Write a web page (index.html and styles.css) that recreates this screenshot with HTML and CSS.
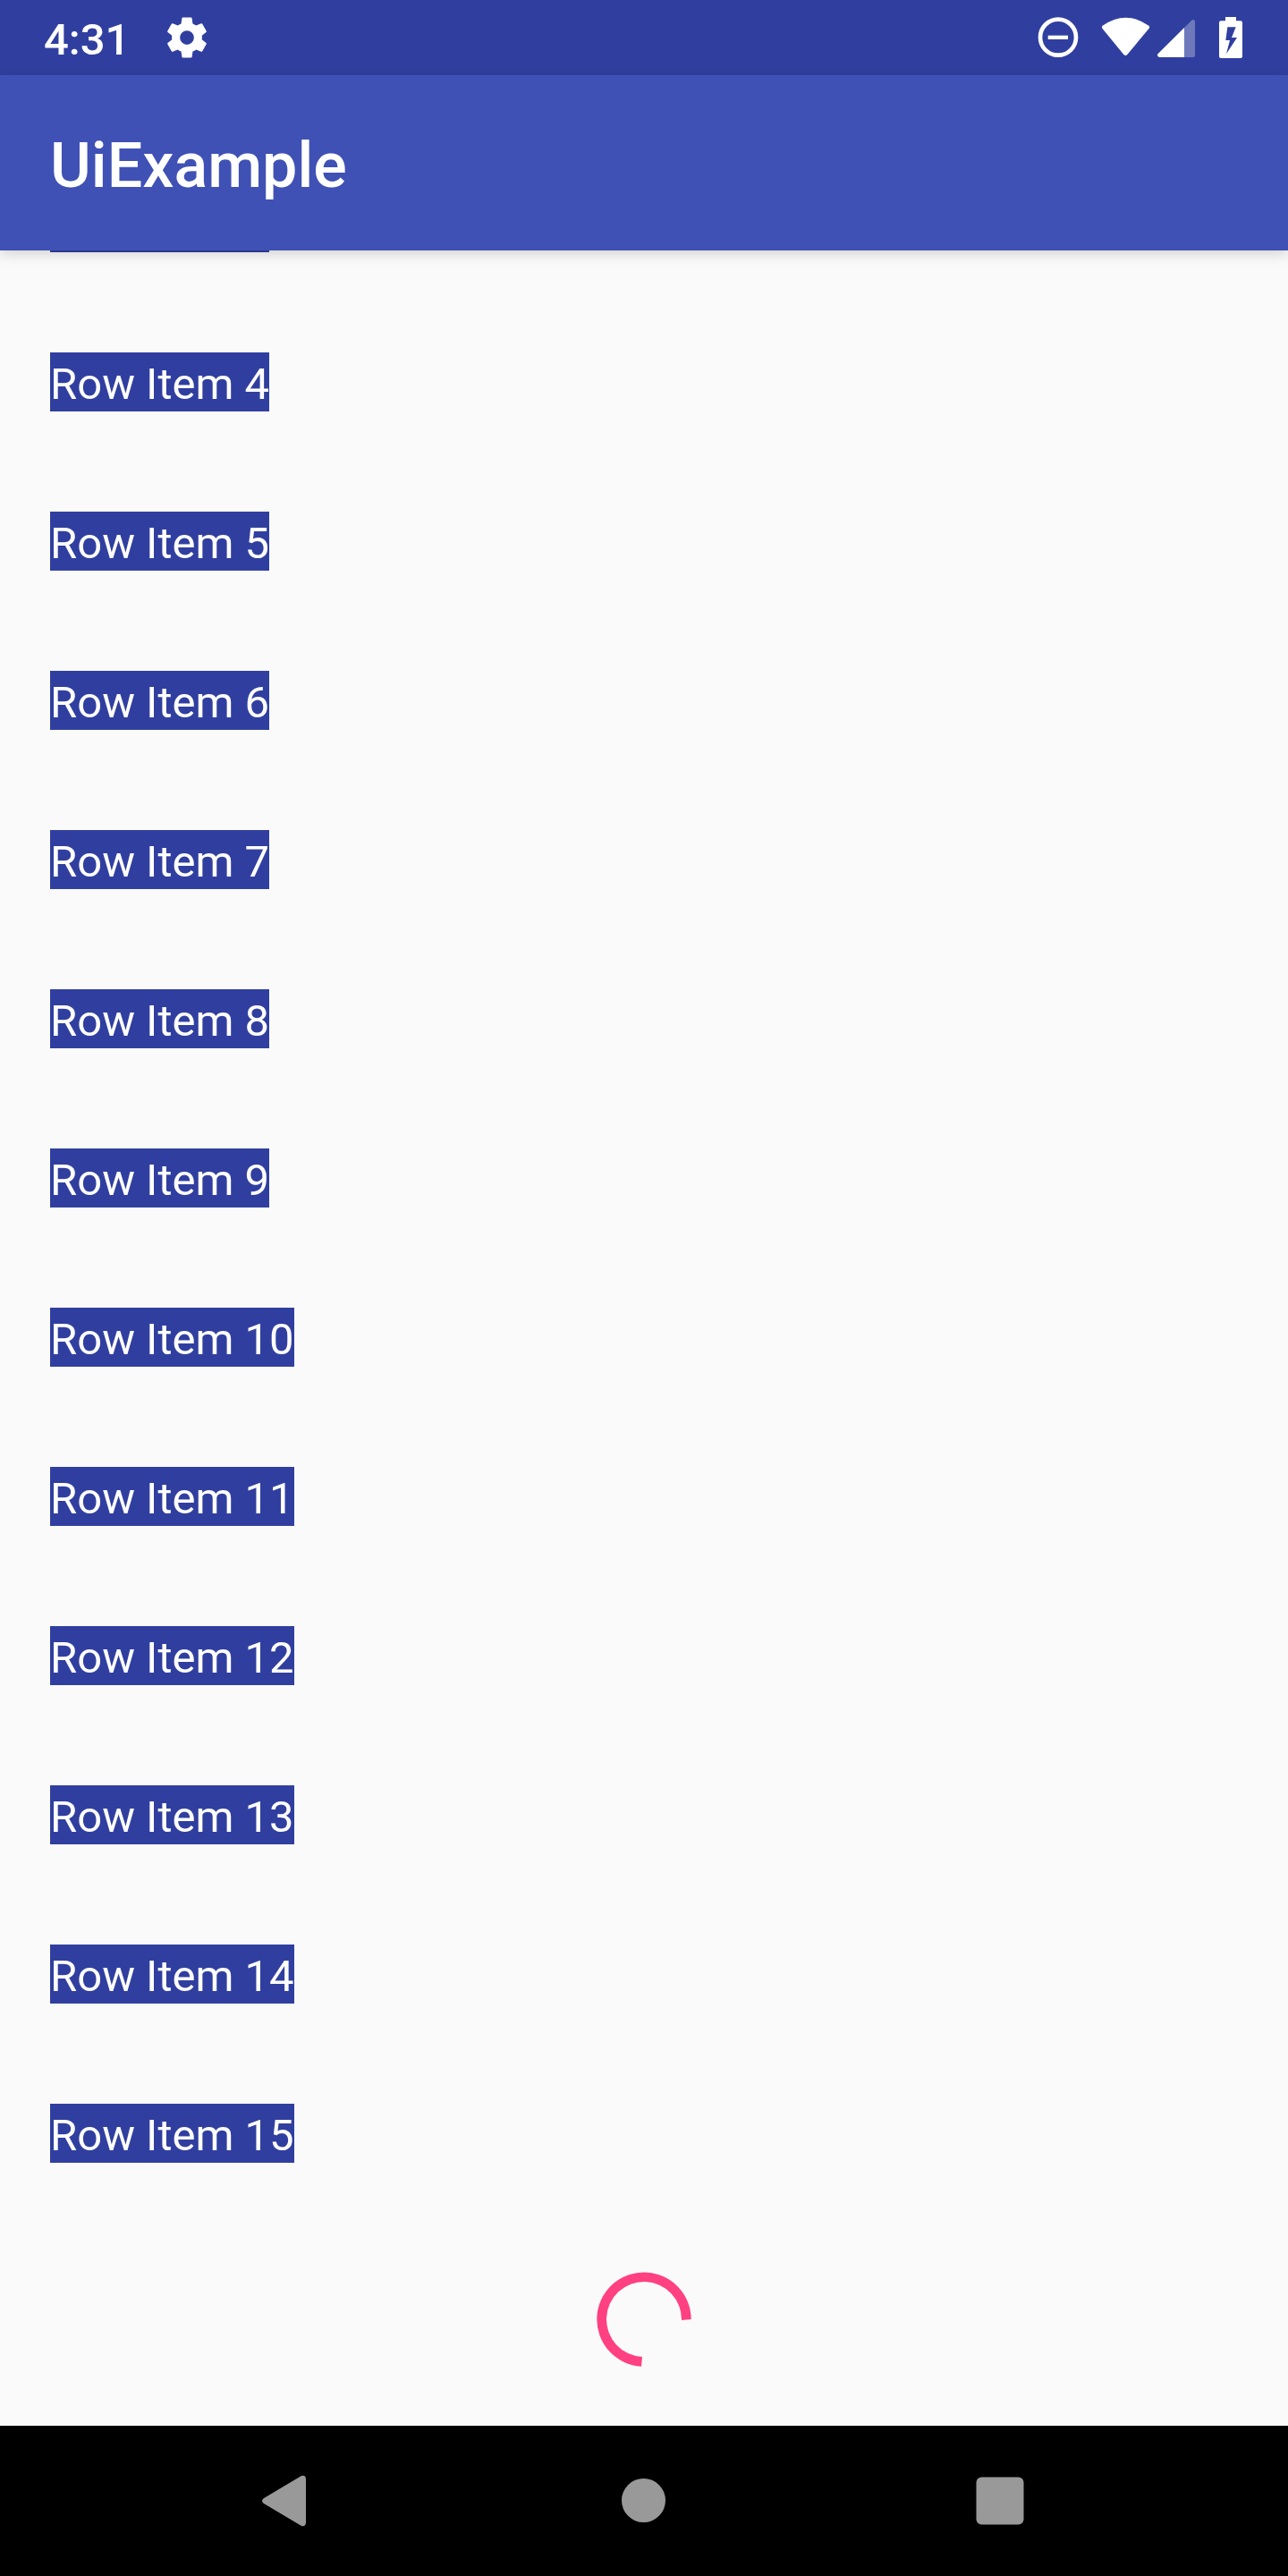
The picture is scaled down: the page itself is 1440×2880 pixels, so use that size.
FILE: index.html
```html
<!DOCTYPE html>
<html lang="en">
<head>
  <meta charset="utf-8">
  <meta name="viewport" content="width=device-width, initial-scale=1">
  <title>UiExample</title>
  <link rel="stylesheet" href="styles.css">
</head>
<body>
  <div class="screen">
    <div class="status-bar">
      <div class="status-left">
        <time class="clock">4:31</time>
        <svg class="icon-gear" viewBox="0 0 24 24" aria-hidden="true"><path fill-rule="evenodd" d="M19.43 12.98c.04-.32.07-.64.07-.98s-.03-.66-.07-.98l2.11-1.65c.19-.15.24-.42.12-.64l-2-3.46c-.12-.22-.39-.3-.61-.22l-2.49 1c-.52-.4-1.08-.73-1.69-.98l-.38-2.65C14.46 2.18 14.25 2 14 2h-4c-.25 0-.46.18-.49.42l-.38 2.65c-.61.25-1.17.59-1.69.98l-2.49-1c-.23-.09-.49 0-.61.22l-2 3.46c-.13.22-.07.49.12.64l2.11 1.65c-.04.32-.07.65-.07.98s.03.66.07.98l-2.11 1.65c-.19.15-.24.42-.12.64l2 3.46c.12.22.39.3.61.22l2.49-1c.52.4 1.08.73 1.69.98l.38 2.65c.03.24.24.42.49.42h4c.25 0 .46-.18.49-.42l.38-2.65c.61-.25 1.17-.59 1.69-.98l2.49 1c.23.09.49 0 .61-.22l2-3.46c.12-.22.07-.49-.12-.64zM12 15.5a3.5 3.5 0 1 1 0-7 3.5 3.5 0 0 1 0 7z"/></svg>
      </div>
      <div class="status-right">
        <svg class="icon-dnd" viewBox="60 48 138 156" aria-hidden="true"><circle cx="129" cy="125" r="60" fill="none" stroke="#fff" stroke-width="14"/><path d="M95 119h67v13H95z"/></svg>
        <svg class="icon-wifi" viewBox="276 48 159 156" aria-hidden="true"><path d="M278 86Q356 32 433 86Q437 90 434 95L361 183Q355 189 349 183L277 95Q274 90 278 86Z"/></svg>
        <svg class="icon-cell" viewBox="462 48 126 156" aria-hidden="true"><path d="M552 93V192H468Q462 192 462 184Q462 181 465 179Z"/><path opacity=".3" d="M552 93L577 68Q580 66 583 66Q588 67 588 72V186Q588 192 582 192H552Z"/></svg>
        <svg class="icon-battery" viewBox="669 48 78 156" aria-hidden="true"><path fill-rule="evenodd" d="M690 57H726V70H741Q747 70 747 76V189Q747 195 741 195H675Q669 195 669 189V76Q669 70 675 70H690ZM697 91L691 135H705L693 181L729 126H711L725 91Z"/></svg>
      </div>
    </div>
    <header class="app-bar">
      <h1 class="title">UiExample</h1>
    </header>
    <main class="content">
      <ul class="list">
        <li class="row"><span class="label">Row Item 3</span></li>
        <li class="row"><span class="label">Row Item 4</span></li>
        <li class="row"><span class="label">Row Item 5</span></li>
        <li class="row"><span class="label">Row Item 6</span></li>
        <li class="row"><span class="label">Row Item 7</span></li>
        <li class="row"><span class="label">Row Item 8</span></li>
        <li class="row"><span class="label">Row Item 9</span></li>
        <li class="row"><span class="label">Row Item 10</span></li>
        <li class="row"><span class="label">Row Item 11</span></li>
        <li class="row"><span class="label">Row Item 12</span></li>
        <li class="row"><span class="label">Row Item 13</span></li>
        <li class="row"><span class="label">Row Item 14</span></li>
        <li class="row"><span class="label">Row Item 15</span></li>
      </ul>
      <div class="loading" role="status" aria-label="Loading">
        <svg class="spinner" viewBox="0 9 480 480" aria-hidden="true"><path d="M398 249A158 158 0 1 0 231 407L234 375A126 126 0 1 1 366 252Z"/></svg>
      </div>
    </main>
    <nav class="nav-bar">
      <button class="nav-button" type="button" aria-label="Back"><svg class="nav-icon" viewBox="0 0 84 84" aria-hidden="true"><path d="M15 39L57 14Q62 13 62 18V66Q62 71 57 70L15 45Q11 42 15 39Z"/></svg></button>
      <button class="nav-button" type="button" aria-label="Home"><svg class="nav-icon" viewBox="0 0 84 84" aria-hidden="true"><circle cx="41.500" cy="41.500" r="24.500"/></svg></button>
      <button class="nav-button" type="button" aria-label="Recent apps"><svg class="nav-icon" viewBox="0 0 84 84" aria-hidden="true"><rect x="15.500" y="15.500" width="53" height="53" rx="6"/></svg></button>
    </nav>
  </div>
</body>
</html>
```
FILE: styles.css
```css
* {
  box-sizing: border-box;
}

body {
  margin: 0;
  background: #fafafa;
  color: #fff;
  font-family: Roboto, "Noto Sans", sans-serif;
  font-size: 49px;
}

svg {
  display: block;
  flex: none;
  fill: #fff;
}

.screen {
  display: flex;
  flex-direction: column;
  height: 100vh;
}

.status-bar {
  display: flex;
  flex: none;
  align-items: center;
  justify-content: space-between;
  height: 84px;
  padding: 0 51px 0 49px;
  background: #303f9f;
}

.status-left,
.status-right {
  display: flex;
  align-items: center;
}

.status-left {
  gap: 37px;
}

.clock {
  padding-top: 6px;
  font-weight: 500;
  line-height: 60px;
}

.icon-gear {
  width: 54px;
  height: 54px;
}

.icon-dnd {
  width: 46px;
  height: 52px;
  margin-right: 26px;
}

.icon-wifi {
  width: 53px;
  height: 52px;
  margin-right: 9px;
}

.icon-cell {
  width: 42px;
  height: 52px;
  margin-right: 27px;
}

.icon-battery {
  width: 26px;
  height: 52px;
}

.app-bar {
  position: relative;
  z-index: 1;
  display: flex;
  flex: none;
  align-items: center;
  height: 196px;
  padding: 6px 56px 0;
  background: #3f51b5;
  box-shadow: 0 4px 14px rgba(0, 0, 0, 0.16);
}

.title {
  margin: 0;
  font-size: 70px;
  font-weight: 500;
  line-height: 84px;
}

/* The list is scrolled to its end, so the overflow is clipped at the top. */
.content {
  display: flex;
  flex: 1;
  flex-direction: column;
  justify-content: flex-end;
  min-height: 0;
  overflow: hidden;
}

.list {
  flex: none;
  margin: 0;
  padding: 0;
  list-style: none;
}

.row {
  display: flex;
  padding: 56px;
}

.label {
  padding-top: 6px;
  background: #303f9f;
  line-height: 60px;
}

.loading {
  display: flex;
  flex: none;
  align-items: center;
  justify-content: center;
  height: 238px;
}

.spinner {
  width: 160px;
  height: 160px;
  fill: #ff4081;
}

.nav-bar {
  display: grid;
  flex: none;
  grid-template-columns: repeat(3, 1fr);
  height: 168px;
  padding: 0 123px;
  background: #000;
}

.nav-button {
  display: flex;
  align-items: center;
  justify-content: center;
  padding: 0;
  border: 0;
  background: none;
}

.nav-icon {
  width: 84px;
  height: 84px;
  fill: #999;
}
```
